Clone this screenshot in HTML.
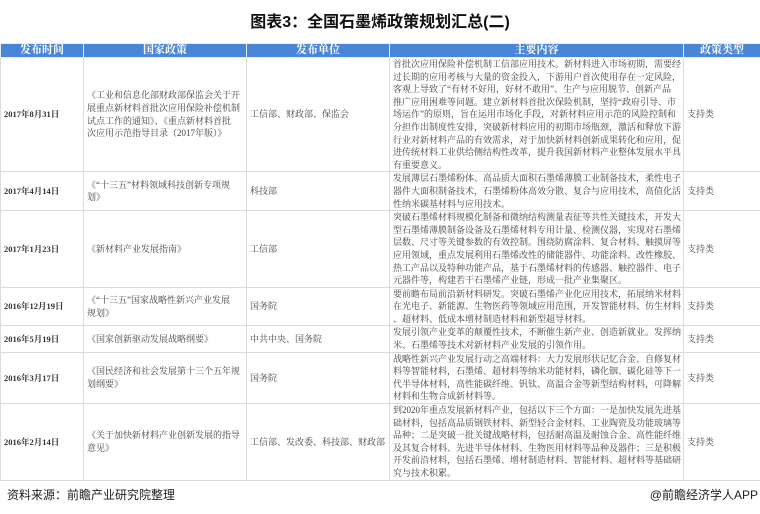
<!DOCTYPE html>
<html><head><meta charset="utf-8"><style>
*{margin:0;padding:0;box-sizing:border-box}
body{width:760px;height:514px;background:#fff;position:relative;overflow:hidden;font-family:"Liberation Serif","Noto Serif CJK SC",serif;color:#444}
.title{position:absolute;top:8px;left:0;width:760px;text-align:center;font:bold 16px "Liberation Sans","Noto Sans CJK SC",sans-serif;color:#111}
table{position:absolute;left:0;top:43px;border-collapse:collapse;table-layout:fixed;width:760px}
td,th{border:1px solid #dcdcdc;font-size:9px;line-height:12.6px;padding:0 3px;vertical-align:middle;white-space:nowrap;overflow:hidden}
th{background:#4a86d8;color:#fff;height:14px;font-size:11px;line-height:13px;text-align:center;border-color:#e8eef8}
td.d{font-weight:bold;font-size:8.5px;color:#333}
.foot{position:absolute;top:486px;left:7px;font:12px "Liberation Sans","Noto Sans CJK SC",sans-serif;color:#222}
.app{position:absolute;top:486px;right:2px;font:12px "Liberation Sans","Noto Sans CJK SC",sans-serif;color:#222}
</style></head><body>
<div class="title">图表3：全国石墨烯政策规划汇总(二)</div>
<table>
<colgroup><col style="width:83px"><col style="width:163px"><col style="width:143px"><col style="width:294px"><col style="width:77px"></colgroup>
<tr><th>发布时间</th><th>国家政策</th><th>发布单位</th><th>主要内容</th><th>政策类型</th></tr>
<tr style="height:113px"><td class="d">2017年8月31日</td><td>《工业和信息化部财政部保监会关于开<br>展重点新材料首批次应用保险补偿机制<br>试点工作的通知》、《重点新材料首批<br>次应用示范指导目录（2017年版）》</td><td>工信部、财政部、保监会</td><td>首批次应用保险补偿机制工信部应用技术。新材料进入市场初期，需要经<br>过长期的应用考核与大量的资金投入，下游用户首次使用存在一定风险，<br>客观上导致了“有材不好用，好材不敢用”、生产与应用脱节、创新产品<br>推广应用困难等问题。建立新材料首批次保险机制，坚持“政府引导、市<br>场运作”的原则，旨在运用市场化手段，对新材料应用示范的风险控制和<br>分担作出制度性安排，突破新材料应用的初期市场瓶颈，激活和释放下游<br>行业对新材料产品的有效需求，对于加快新材料创新成果转化和应用，促<br>进传统材料工业供给侧结构性改革，提升我国新材料产业整体发展水平具<br>有重要意义。</td><td>支持类</td></tr>
<tr style="height:38px"><td class="d">2017年4月14日</td><td>《“十三五”材料领域科技创新专项规<br>划》</td><td>科技部</td><td>发展薄层石墨烯粉体、高品质大面积石墨烯薄膜工业制备技术，柔性电子<br>器件大面积制备技术，石墨烯粉体高效分散、复合与应用技术，高值化活<br>性纳米碳基材料与应用技术。</td><td>支持类</td></tr>
<tr style="height:75px"><td class="d">2017年1月23日</td><td>《新材料产业发展指南》</td><td>工信部</td><td>突破石墨烯材料规模化制备和微纳结构测量表征等共性关键技术，开发大<br>型石墨烯薄膜制备设备及石墨烯材料专用计量、检测仪器，实现对石墨烯<br>层数、尺寸等关键参数的有效控制。围绕防腐涂料、复合材料、触摸屏等<br>应用领域，重点发展利用石墨烯改性的储能器件、功能涂料、改性橡胶、<br>热工产品以及特种功能产品，基于石墨烯材料的传感器、触控器件、电子<br>元器件等，构建若干石墨烯产业链，形成一批产业集聚区。</td><td>支持类</td></tr>
<tr style="height:38px"><td class="d">2016年12月19日</td><td>《“十三五”国家战略性新兴产业发展<br>规划》</td><td>国务院</td><td>要前瞻布局前沿新材料研发。突破石墨烯产业化应用技术，拓展纳米材料<br>在光电子、新能源、生物医药等领域应用范围，开发智能材料、仿生材料<br>、超材料、低成本增材制造材料和新型超导材料。</td><td>支持类</td></tr>
<tr style="height:25px"><td class="d">2016年5月19日</td><td>《国家创新驱动发展战略纲要》</td><td>中共中央、国务院</td><td>发展引领产业变革的颠覆性技术，不断催生新产业、创造新就业。发挥纳<br>米、石墨烯等技术对新材料产业发展的引领作用。</td><td>支持类</td></tr>
<tr style="height:51px"><td class="d">2016年3月17日</td><td>《国民经济和社会发展第十三个五年规<br>划纲要》</td><td>国务院</td><td>战略性新兴产业发展行动之高端材料：大力发展形状记忆合金、自修复材<br>料等智能材料，石墨烯、超材料等纳米功能材料，磷化铟、碳化硅等下一<br>代半导体材料，高性能碳纤维、钒钛、高温合金等新型结构材料，可降解<br>材料和生物合成新材料等。</td><td>支持类</td></tr>
<tr style="height:75px"><td class="d">2016年2月14日</td><td>《关于加快新材料产业创新发展的指导<br>意见》</td><td>工信部、发改委、科技部、财政部</td><td>到2020年重点发展新材料产业，包括以下三个方面：一是加快发展先进基<br>础材料，包括高品质钢铁材料、新型轻合金材料、工业陶瓷及功能玻璃等<br>品种；二是突破一批关键战略材料，包括耐高温及耐蚀合金、高性能纤维<br>及其复合材料、先进半导体材料、生物医用材料等品种及器件；三是积极<br>开发前沿材料，包括石墨烯、增材制造材料、智能材料、超材料等基础研<br>究与技术积累。</td><td>支持类</td></tr>
</table>
<div class="foot">资料来源：前瞻产业研究院整理</div>
<div class="app">@前瞻经济学人APP</div>
</body></html>
